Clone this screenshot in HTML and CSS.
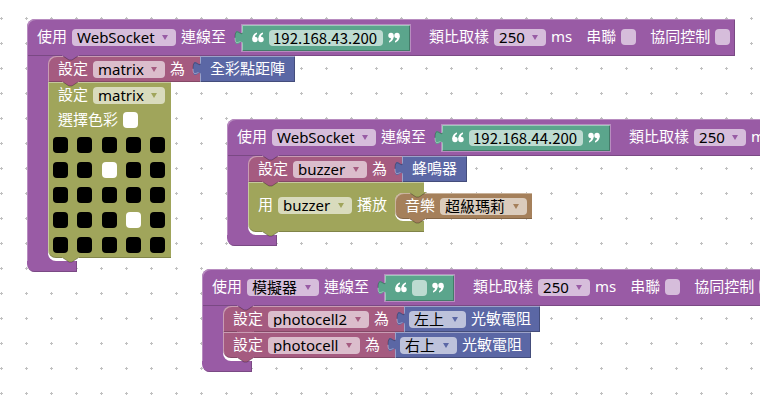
FILE: index.html
```
<!DOCTYPE html>
<html lang="zh-Hant">
<head>
<meta charset="utf-8">
<meta name="viewport" content="width=device-width, initial-scale=1">
<title>WebSocket</title>
<link rel="stylesheet" href="styles.css">
</head>
<body>
<svg class="defs" aria-hidden="true">
  <symbol id="nub" viewBox="0 0 17 6"><path d="M0 0H17V1H16L10 5H7L1 1H0Z" fill="currentColor"/><path d="M1 1L7 5H10L16 1" fill="none" stroke="#000" stroke-opacity=".3"/></symbol>
  <symbol id="tab" viewBox="0 0 9 17"><path d="M9 1C9 11 1 -7 1 8.500S9 6 9 16Z" fill="currentColor"/><path d="M8.500 4C7 7 1 -3 1 8.500" fill="none" stroke="#000" stroke-opacity=".25"/><path d="M1 9C1 16 4.500 13 6.500 12.500" fill="none" stroke="#fff" stroke-opacity=".35"/></symbol>
  <symbol id="quote-open" viewBox="0 0 12 11"><g fill="#fff"><circle cx="3" cy="7.500" r="2.700"/><circle cx="9" cy="7.500" r="2.700"/><path d="M.3 7.500C.1 4 2 1.200 5 .5v1.400C3.400 2.800 2.800 4 3 5.500ZM6.300 7.500C6.100 4 8 1.200 11 .5v1.400C9.400 2.800 8.800 4 9 5.500Z"/></g></symbol>
  <symbol id="quote-close" viewBox="0 0 12 11"><use href="#quote-open" width="12" height="11" transform="rotate(180 6 5.500)"/></symbol>
</svg>
<main class="workspace">

  <section class="program program-a">
    <div class="head purple">
      <label for="a-link">使用</label>
      <span class="field"><select id="a-link"><option>WebSocket</option></select></span>
      <label for="a-ip">連線至</label>
      <span class="value text green"><svg class="tab"><use href="#tab"/></svg><svg class="quote"><use href="#quote-open"/></svg><input class="ip" id="a-ip" type="text" value="192.168.43.200"><svg class="quote"><use href="#quote-close"/></svg></span>
      <span class="group"><label for="a-rate">類比取樣</label><span class="field"><select id="a-rate"><option>250</option></select></span><span class="word">ms</span></span>
      <span class="group"><label for="a-serial">串聯</label><input id="a-serial" type="checkbox"></span>
      <span class="group"><label for="a-share">協同控制</label><input id="a-share" type="checkbox"></span>
      <svg class="nub"><use href="#nub"/></svg>
    </div>
    <div class="body">
      <div class="row">
        <div class="block rose"><label for="a-var">設定</label><span class="field"><select id="a-var"><option>matrix</option></select></span><span class="word">為</span><svg class="nub"><use href="#nub"/></svg></div>
        <div class="value blue"><svg class="tab"><use href="#tab"/></svg><span class="word">全彩點距陣</span></div>
      </div>
      <div class="block olive matrix-block">
        <div class="line"><label for="a-set">設定</label><span class="field"><select id="a-set"><option>matrix</option></select></span></div>
        <div class="line"><label for="a-color">選擇色彩</label><button id="a-color" class="swatch on"></button></div>
        <div class="matrix">
          <button class="swatch" aria-label="1-1"></button><button class="swatch" aria-label="1-2"></button><button class="swatch" aria-label="1-3"></button><button class="swatch" aria-label="1-4"></button><button class="swatch" aria-label="1-5"></button>
          <button class="swatch" aria-label="2-1"></button><button class="swatch" aria-label="2-2"></button><button class="swatch on" aria-label="2-3"></button><button class="swatch" aria-label="2-4"></button><button class="swatch" aria-label="2-5"></button>
          <button class="swatch" aria-label="3-1"></button><button class="swatch" aria-label="3-2"></button><button class="swatch" aria-label="3-3"></button><button class="swatch" aria-label="3-4"></button><button class="swatch" aria-label="3-5"></button>
          <button class="swatch" aria-label="4-1"></button><button class="swatch" aria-label="4-2"></button><button class="swatch" aria-label="4-3"></button><button class="swatch on" aria-label="4-4"></button><button class="swatch" aria-label="4-5"></button>
          <button class="swatch" aria-label="5-1"></button><button class="swatch" aria-label="5-2"></button><button class="swatch" aria-label="5-3"></button><button class="swatch" aria-label="5-4"></button><button class="swatch" aria-label="5-5"></button>
        </div>
        <svg class="nub"><use href="#nub"/></svg>
      </div>
    </div>
    <div class="foot purple"></div>
  </section>

  <section class="program program-b">
    <div class="head purple">
      <label for="b-link">使用</label>
      <span class="field"><select id="b-link"><option>WebSocket</option></select></span>
      <label for="b-ip">連線至</label>
      <span class="value text green"><svg class="tab"><use href="#tab"/></svg><svg class="quote"><use href="#quote-open"/></svg><input class="ip" id="b-ip" type="text" value="192.168.44.200"><svg class="quote"><use href="#quote-close"/></svg></span>
      <span class="group"><label for="b-rate">類比取樣</label><span class="field"><select id="b-rate"><option>250</option></select></span><span class="word">ms</span></span>
      <span class="group"><label for="b-serial">串聯</label><input id="b-serial" type="checkbox"></span>
      <span class="group"><label for="b-share">協同控制</label><input id="b-share" type="checkbox"></span>
      <svg class="nub"><use href="#nub"/></svg>
    </div>
    <div class="body">
      <div class="row">
        <div class="block rose"><label for="b-var">設定</label><span class="field"><select id="b-var"><option>buzzer</option></select></span><span class="word">為</span><svg class="nub"><use href="#nub"/></svg></div>
        <div class="value blue"><svg class="tab"><use href="#tab"/></svg><span class="word">蜂鳴器</span></div>
      </div>
      <div class="block olive play-block">
        <label for="b-play">用</label><span class="field"><select id="b-play"><option>buzzer</option></select></span><span class="word">播放</span>
        <div class="slot">
          <svg class="nub olive-nub"><use href="#nub"/></svg>
          <div class="block brown"><label for="b-song">音樂</label><span class="field"><select id="b-song"><option>超級瑪莉</option></select></span><svg class="nub"><use href="#nub"/></svg></div>
        </div>
        <svg class="nub"><use href="#nub"/></svg>
      </div>
    </div>
    <div class="foot purple"></div>
  </section>

  <section class="program program-c">
    <div class="head purple">
      <label for="c-link">使用</label>
      <span class="field"><select id="c-link"><option>模擬器</option></select></span>
      <label for="c-ip">連線至</label>
      <span class="value text green"><svg class="tab"><use href="#tab"/></svg><svg class="quote"><use href="#quote-open"/></svg><input class="ip empty" id="c-ip" type="text" value=""><svg class="quote"><use href="#quote-close"/></svg></span>
      <span class="group"><label for="c-rate">類比取樣</label><span class="field"><select id="c-rate"><option>250</option></select></span><span class="word">ms</span></span>
      <span class="group"><label for="c-serial">串聯</label><input id="c-serial" type="checkbox"></span>
      <span class="group"><label for="c-share">協同控制</label><input id="c-share" type="checkbox"></span>
      <svg class="nub"><use href="#nub"/></svg>
    </div>
    <div class="body">
      <div class="row">
        <div class="block rose"><label for="c-var1">設定</label><span class="field"><select id="c-var1"><option>photocell2</option></select></span><span class="word">為</span><svg class="nub"><use href="#nub"/></svg></div>
        <div class="value blue sensor"><svg class="tab"><use href="#tab"/></svg><span class="field"><select id="c-pos1"><option>左上</option></select></span><label for="c-pos1">光敏電阻</label></div>
      </div>
      <div class="row">
        <div class="block rose"><label for="c-var2">設定</label><span class="field"><select id="c-var2"><option>photocell</option></select></span><span class="word">為</span><svg class="nub"><use href="#nub"/></svg></div>
        <div class="value blue sensor"><svg class="tab"><use href="#tab"/></svg><span class="field"><select id="c-pos2"><option>右上</option></select></span><label for="c-pos2">光敏電阻</label></div>
      </div>
    </div>
    <div class="foot purple"></div>
  </section>
</main>
</body>
</html>
```
FILE: styles.css
```
:root {
  --purple: #995ba5;
  --rose: #a55b80;
  --olive: #a0a55b;
  --green: #5ba58c;
  --blue: #5b67a5;
  --brown: #a5805b;
}

* { box-sizing: border-box; }

body {
  margin: 0;
  font: 15px/16px "Noto Sans", "Noto Sans CJK TC", sans-serif;
  color: #fff;
}

.defs { position: absolute; width: 0; height: 0; }

/* Workspace canvas with its grid of small crosses */
.workspace {
  position: relative;
  min-height: 100vh;
  overflow: hidden;
  background: #fff url("data:image/svg+xml,%3Csvg xmlns='http://www.w3.org/2000/svg' width='25' height='25'%3E%3Cpath d='M0 1h3v1H0zM1 0h1v3H1z' fill='%23c0c0c0'/%3E%3C/svg%3E") 0 17px / 25px 25px;
}

/* Programs sit freely on the canvas */
.program { position: absolute; width: max-content; }
.program-a { left: 27px; top: 19px; }
.program-b { left: 227px; top: 119px; }
.program-c { left: 202px; top: 269px; }

.purple { background: var(--purple); --ink: var(--purple); }
.rose { background: var(--rose); --ink: var(--rose); }
.olive { background: var(--olive); --ink: var(--olive); }
.green { background: var(--green); --ink: var(--green); }
.blue { background: var(--blue); --ink: var(--blue); }
.brown { background: var(--brown); --ink: var(--brown); }

.head,
.block,
.value,
.line,
.group {
  display: flex;
  align-items: center;
  gap: 5px;
  white-space: nowrap;
}

label,
.word { padding-bottom: 2px; }

.head {
  position: relative;
  z-index: 2;
  height: 37px;
  padding: 0 5px 1px 10px;
  border-radius: 8px 0 0 0;
  box-shadow: inset 1px 1px #b88cc0, inset -1px -1px #7a4984;
}
.head .nub { left: 35px; }
.group { margin-left: 9px; }
.text + .group { margin-left: 14px; }

.body {
  position: relative;
  padding: 0 0 3px 21px;
  background: linear-gradient(var(--purple), var(--purple)) no-repeat 0 0 / 50px 100%;
  box-shadow: inset 1px 0 #b88cc0;
}
.body::before {
  content: "";
  position: absolute;
  inset: 0 auto 0 21px;
  width: 30px;
  background: #fff;
  border-radius: 0 0 0 8px;
}
.body::after {
  content: "";
  position: absolute;
  left: 21px;
  top: 0;
  width: 9px;
  height: 9px;
  background: var(--purple);
}

.foot {
  width: 50px;
  height: 11px;
  border-radius: 0 0 0 8px;
  box-shadow: inset -1px -1px #7a4984;
}

.row { display: flex; position: relative; z-index: 1; }

.block {
  position: relative;
  width: max-content;
  height: 26px;
  padding: 0 15px 0 10px;
  box-shadow: inset 1px 1px rgba(255, 255, 255, .4), inset 0 -1px rgba(0, 0, 0, .2);
}
.row:first-child .block { border-radius: 8px 0 0 0; }
.body > :last-child,
.body > :last-child > .block { border-radius: 0 0 0 8px; }

.value {
  position: relative;
  height: 26px;
  padding: 0 10px;
  box-shadow: inset 1px 1px rgba(255, 255, 255, .4), inset -1px -1px rgba(0, 0, 0, .25);
}
.sensor { padding: 0 9px 0 5px; }
.text { margin: 2px 0 0 11px; outline: 1px solid #b88cc0; }

.nub {
  position: absolute;
  z-index: 3;
  left: 14px;
  bottom: -5px;
  width: 17px;
  height: 6px;
  color: var(--ink);
}
.tab {
  position: absolute;
  left: -8px;
  top: 4px;
  width: 9px;
  height: 17px;
  color: var(--ink);
}
.quote { width: 12px; height: 11px; margin-bottom: 2px; }

.matrix-block {
  flex-direction: column;
  align-items: stretch;
  gap: 9px;
  width: 123px;
  height: auto;
  padding: 5px;
}
.line { padding-left: 5px; height: 16px; }
.matrix {
  display: grid;
  grid-template-columns: repeat(5, 15px);
  justify-content: space-between;
  row-gap: 9px;
  padding-right: 1px;
}

.play-block { height: 50px; padding: 0 0 4px 10px; }
.slot {
  position: relative;
  align-self: flex-start;
  width: 29px;
  height: 28px;
  margin: 11px 0 0 3px;
  background: #fff;
  border-radius: 8px 0 0 8px;
}
.slot .brown { padding: 0 5px 0 10px; border-radius: 8px 0 0 8px; }
.slot > .olive-nub { bottom: auto; top: -1px; }

/* Controls */
.field { position: relative; display: inline-flex; }
.field::after {
  content: "";
  position: absolute;
  right: 8px;
  top: 6px;
  border: 3px solid transparent;
  border-top: 5px solid var(--ink);
  border-bottom: 0;
  pointer-events: none;
}
select,
input,
button {
  appearance: none;
  margin: 0;
  border: 0;
  border-radius: 4px;
  background: rgba(255, 255, 255, .6);
  color: #000;
  font: inherit;
}
select { height: 17px; padding: 0 21px 1px 5px; }
.ip {
  width: 114px;
  height: 16px;
  padding: 0 4px 1px;
  font-family: "Noto Sans CJK TC", sans-serif;
}
.empty { width: 15px; }
input[type="checkbox"] { width: 15px; height: 16px; }
.swatch { width: 15px; height: 16px; padding: 0; background: #000; }
.on { background: #fff; }
```
